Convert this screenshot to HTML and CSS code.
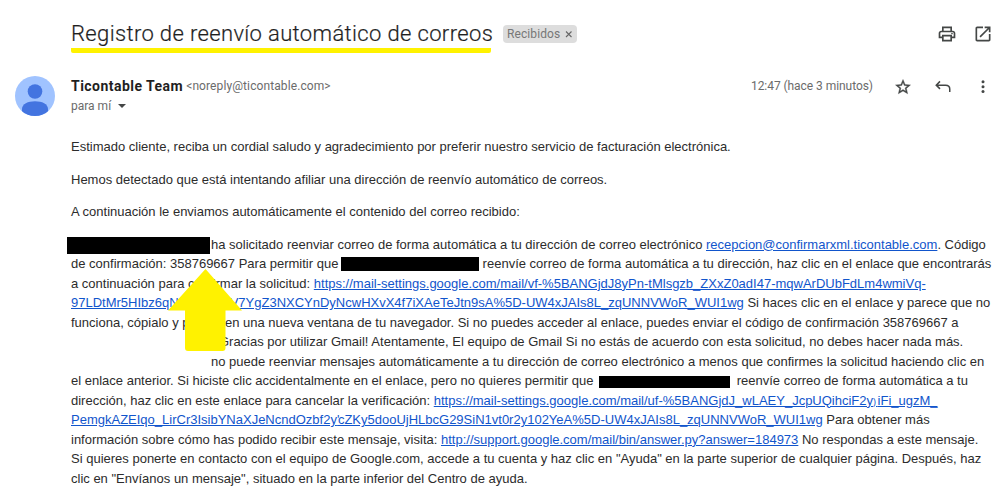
FILE: index.html
```html
<!DOCTYPE html>
<html lang="es">
<head>
    <meta charset="UTF-8">
    <meta name="viewport" content="width=device-width, initial-scale=1.0">
    <title>Registro de reenvío automático de correos</title>
    <link rel="stylesheet" href="styles.css">
</head>
<body>
    <main class="mail">
        <header class="subject-row">
            <h1 class="subject">Registro de reenvío automático de correos</h1>
            <span class="label"><span class="label-name">Recibidos</span>
                <svg width="8" height="8" viewBox="0 0 8 8"><path d="M1 1.5l5.5 5.5M6.5 1.5L1 7" stroke="#666" stroke-width="1.1"/></svg>
            </span>
            <div class="subject-actions">
                <svg width="20" height="20" viewBox="0 0 24 24"><path d="M19 8h-1V3H6v5H5c-1.66 0-3 1.34-3 3v6h4v4h12v-4h4v-6c0-1.66-1.34-3-3-3zM8 5h8v3H8V5zm8 12v2H8v-4h8v2zm2-2v-2H6v2H4v-4c0-.55.45-1 1-1h14c.55 0 1 .45 1 1v4h-2z"/><circle cx="18" cy="11.5" r="1"/></svg>
                <svg width="20" height="20" viewBox="0 0 24 24"><path d="M19 19H5V5h7V3H5c-1.11 0-2 .9-2 2v14c0 1.1.89 2 2 2h14c1.1 0 2-.9 2-2v-7h-2v7zM14 3v2h3.59l-9.83 9.83 1.41 1.41L19 6.41V10h2V3h-7z"/></svg>
            </div>
        </header>

        <section class="sender-row">
            <svg class="avatar" width="40" height="40" viewBox="0 0 40 40">
                <clipPath id="round"><circle cx="20" cy="20" r="20"/></clipPath>
                <g clip-path="url(#round)">
                    <rect width="40" height="40" fill="#a0c3ff"/>
                    <circle cx="20" cy="15.5" r="7.3" fill="#4374e0"/>
                    <path d="M7 40v-7c0-5 6-7.7 13-7.7S33 28 33 33v7z" fill="#4374e0"/>
                </g>
            </svg>
            <div class="sender">
                <div class="from"><span class="name">Ticontable Team</span><span class="address">&lt;noreply@ticontable.com&gt;</span></div>
                <div class="to"><span class="to-name">para mí</span><span class="caret"></span></div>
            </div>
            <span class="date">12:47 (hace 3 minutos)</span>
            <div class="sender-actions">
                <svg width="18" height="18" viewBox="0 0 24 24"><path d="M22 9.24l-7.19-.62L12 2 9.19 8.63 2 9.24l5.46 4.73L5.82 21 12 17.27 18.18 21l-1.63-7.03L22 9.24zM12 15.4l-3.76 2.27 1-4.28-3.32-2.88 4.38-.38L12 6.1l1.71 4.04 4.38.38-3.32 2.88 1 4.28L12 15.4z" stroke="#444746" stroke-width=".5"/></svg>
                <svg width="18" height="18" viewBox="0 0 24 24"><path d="M8 4.5l-5 5 5 5M3.5 9.5h12c3.5 0 5.5 2 5.5 5V18.5" fill="none" stroke="#444746" stroke-width="2"/></svg>
                <svg width="18" height="18" viewBox="0 0 24 24"><circle cx="12" cy="5" r="2"/><circle cx="12" cy="11.5" r="2"/><circle cx="12" cy="18" r="2"/></svg>
            </div>
        </section>

        <article class="content">
            <p>Estimado cliente, reciba un cordial saludo y agradecimiento por preferir nuestro servicio de facturación electrónica.</p>
            <p>Hemos detectado que está intentando afiliar una dirección de reenvío automático de correos.</p>
            <p>A continuación le enviamos automáticamente el contenido del correo recibido:</p>
            <p class="forwarded">
                <span class="line"><span class="redacted account"></span>ha solicitado reenviar correo de forma automática a tu dirección de correo electrónico <a href="#">recepcion@confirmarxml.ticontable.com</a>. Código</span>
                <span class="line">de confirmación: 358769667 Para permitir que <span class="redacted requester"></span> reenvíe correo de forma automática a tu dirección, haz clic en el enlace que encontrarás</span>
                <span class="line">a continuación para confirmar la solicitud: <a href="#">https://mail-settings.google.com/mail/vf-%5BANGjdJ8yPn-tMlsgzb_ZXxZ0adI47-mqwArDUbFdLm4wmiVq-</a></span>
                <span class="line"><a href="#">97LDtMr5HIbz6qN<span class="covered"></span>V7YgZ3NXCYnDyNcwHXvX4f7iXAeTeJtn9sA%5D-UW4xJAIs8L_zqUNNVWoR_WUI1wg</a> Si haces clic en el enlace y parece que no</span>
                <span class="line">funciona, cópialo y pégalo en una nueva ventana de tu navegador. Si no puedes acceder al enlace, puedes enviar el código de confirmación 358769667 a</span>
                <span class="line"><span class="blank"></span> ¡Gracias por utilizar Gmail! Atentamente, El equipo de Gmail Si no estás de acuerdo con esta solicitud, no debes hacer nada más.</span>
                <span class="line"><span class="blank"></span>no puede reenviar mensajes automáticamente a tu dirección de correo electrónico a menos que confirmes la solicitud haciendo clic en</span>
                <span class="line">el enlace anterior. Si hiciste clic accidentalmente en el enlace, pero no quieres permitir que <span class="redacted recipient"></span> reenvíe correo de forma automática a tu</span>
                <span class="line">dirección, haz clic en este enlace para cancelar la verificación: <a href="#">https://mail-settings.google.com/mail/uf-%5BANGjdJ_wLAEY_JcpUQihciF2y<span class="clipped">)</span>iFi_ugzM_</a></span>
                <span class="line"><a href="#">PemgkAZEIqo_LirCr3IsibYNaXJeNcndOzbf2y<span class="speck">'</span>cZKy5dooUjHLbcG29SiN1vt0r2y102YeA%5D-UW4xJAIs8L_zqUNNVWoR_WUI1wg</a> Para obtener más</span>
                <span class="line">información sobre cómo has podido recibir este mensaje, visita: <a href="#">http://support.google.com/mail/bin/answer.py?answer=184973</a> No respondas a este mensaje.</span>
                <span class="line">Si quieres ponerte en contacto con el equipo de Google.com, accede a tu cuenta y haz clic en "Ayuda" en la parte superior de cualquier página. Después, haz</span>
                <span class="line">clic en "Envíanos un mensaje", situado en la parte inferior del Centro de ayuda.</span>
            </p>
            <svg class="arrow" width="75" height="83" viewBox="0 0 75 83"><path d="M37.5 0L74 41.5H57.5V79q0 3-3 3H20q-3 0-3-3V41.5H0z" fill="#fff200"/></svg>
        </article>
    </main>
</body>
</html>
```
FILE: styles.css
```css
* {
    box-sizing: border-box;
}
body {
    margin: 0;
    background: #fff;
    color: #2c2c2c;
    font-family: Arial, "Liberation Sans", sans-serif;
    overflow: hidden;
}
.mail {
    width: 993px;
    height: 494px;
    padding-top: 20px;
}
svg {
    display: block;
    flex: none;
    fill: #444746;
}
.subject-row {
    display: flex;
    height: 34px;
    padding-left: 71px;
    align-items: flex-start;
}
.subject {
    width: 420px;
    height: 33px;
    margin: 0;
    border-bottom: 5px solid #fff200;
    border-radius: 2px;
    color: #1f1f1f;
    font: 300 22px/28px Roboto, sans-serif;
    letter-spacing: 0.36px;
    white-space: nowrap;
    -webkit-text-stroke: 0.2px #1f1f1f;
}
.label {
    display: flex;
    align-items: center;
    width: 74px;
    height: 18px;
    margin: 5px 0 0 12px;
    padding: 0 4px;
    border-radius: 4px;
    background: #ddd;
    color: #777;
    font: 12px/18px Roboto, sans-serif;
    letter-spacing: 0.1px;
    justify-content: space-between;
}
.subject-actions {
    display: flex;
    gap: 16px;
    margin: 4px 0 0 auto;
}
.sender-row {
    display: flex;
    height: 83px;
    padding: 22px 0 0 15px;
    font-family: Roboto, sans-serif;
    color: #6b6b6b;
    font-size: 12px;
    line-height: 20px;
}
.sender {
    margin-left: 16px;
}
.from {
    display: flex;
    gap: 3px;
}
.name {
    color: #1f1f1f;
    font-size: 14px;
    font-weight: 700;
    letter-spacing: 0.47px;
}
.address {
    letter-spacing: 0.1px;
}
.to {
    display: flex;
    align-items: center;
    gap: 7px;
}
.caret {
    border: 4px solid transparent;
    border-top-color: #444746;
    border-bottom: 0;
}
.date {
    margin-left: auto;
    letter-spacing: -0.05px;
}
.sender-actions {
    display: flex;
    gap: 22px;
    margin: 2px 1px 0 21px;
}
.content {
    position: relative;
    padding-left: 71px;
    font-size: 13px;
    line-height: 19.5px;
}
.content p {
    margin: 0 0 13px;
    white-space: nowrap;
}
.content a {
    color: #1155cc;
}
.line {
    display: block;
    height: 19.5px;
}
.redacted {
    display: inline-block;
    background: #000;
    vertical-align: middle;
}
.account {
    width: 143px;
    height: 17px;
    margin: 0 1px 0 -4px;
}
.requester {
    width: 138px;
    height: 14px;
    margin: -2px 0 0 -1px;
    vertical-align: -3px;
}
.recipient {
    width: 131px;
    height: 12px;
    margin: 0 3px 0 2px;
    vertical-align: -3px;
}
.blank {
    display: inline-block;
    width: 140px;
}
.covered {
    display: inline-block;
    width: 51px;
}
.clipped {
    font-size: 9px;
    letter-spacing: 1.5px;
}
.speck {
    letter-spacing: -1.5px;
}
/* pointer over the confirmation code */
.arrow {
    position: absolute;
    left: 168px;
    top: 132px;
}
```
